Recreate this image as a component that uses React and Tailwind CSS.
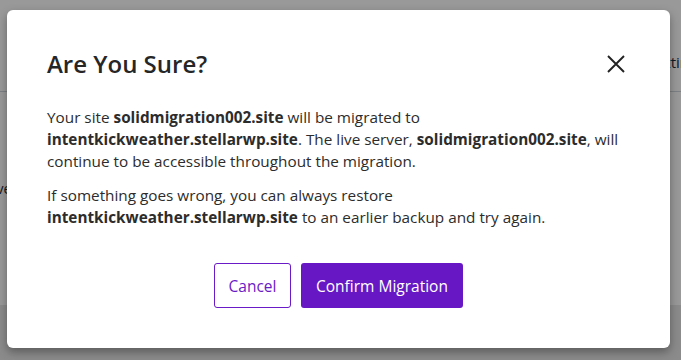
import React from "react";

function CloseIcon() {
  return (
    <svg width="18" height="18" viewBox="0 0 18 18" fill="none" stroke="#222" strokeWidth="1.9">
      <path d="M1 1 L17 17 M17 1 L1 17" />
    </svg>
  );
}

export default function App() {
  return (
    <div
      className="relative h-screen w-full overflow-hidden bg-white"
      style={{ fontFamily: "'Open Sans', 'Noto Sans', sans-serif" }}
    >
      {/* page behind the dialog */}
      <div className="flex h-[92px] items-center justify-end border-b border-gray-300 pt-[34px]">
        <span className="mr-[-8px] text-[15px] text-gray-800">Settin</span>
      </div>
      <div className="h-[213px] pt-[84px]">
        <span className="ml-[-12px] text-[14px] text-gray-800">ove</span>
      </div>
      <div className="h-[55px] bg-[#e8e8e8]" />

      {/* overlay */}
      <div className="absolute inset-0 flex items-center justify-center bg-black/40 pr-[4px] pb-[2px]">
        <div className="w-[663px] rounded-[6px] bg-white px-10 pt-[38px] pb-10 shadow-[0_4px_10px_rgba(0,0,0,0.35)]">
          <div className="flex items-center justify-between">
            <h2 className="text-[24px] font-semibold leading-8 text-[#262626]">Are You Sure?</h2>
            <button className="mr-[-2px] flex h-8 w-8 items-center justify-center">
              <CloseIcon />
            </button>
          </div>

          <div className="mt-[26px] text-[15.3px] leading-[22px] text-[#2c2c2c]">
            <p>
              Your site <b>solidmigration002.site</b> will be migrated to
              <br />
              <b>intentkickweather.stellarwp.site</b>. The live server, <b>solidmigration002.site</b>, will
              <br />
              continue to be accessible throughout the migration.
            </p>
            <p className="mt-[12px]">
              If something goes wrong, you can always restore
              <br />
              <b>intentkickweather.stellarwp.site</b> to an earlier backup and try again.
            </p>
          </div>

          <div className="mt-[35px] flex justify-center gap-[10px]">
            <button className="h-[45px] w-[77px] rounded-[3px] border border-[#6a1ac6] bg-white pt-[3px] text-[15.5px] text-[#6a1ac6]">
              Cancel
            </button>
            <button className="h-[45px] w-[162px] rounded-[3px] bg-[#6718c4] pt-[3px] text-[15.5px] text-white">
              Confirm Migration
            </button>
          </div>
        </div>
      </div>
    </div>
  );
}
